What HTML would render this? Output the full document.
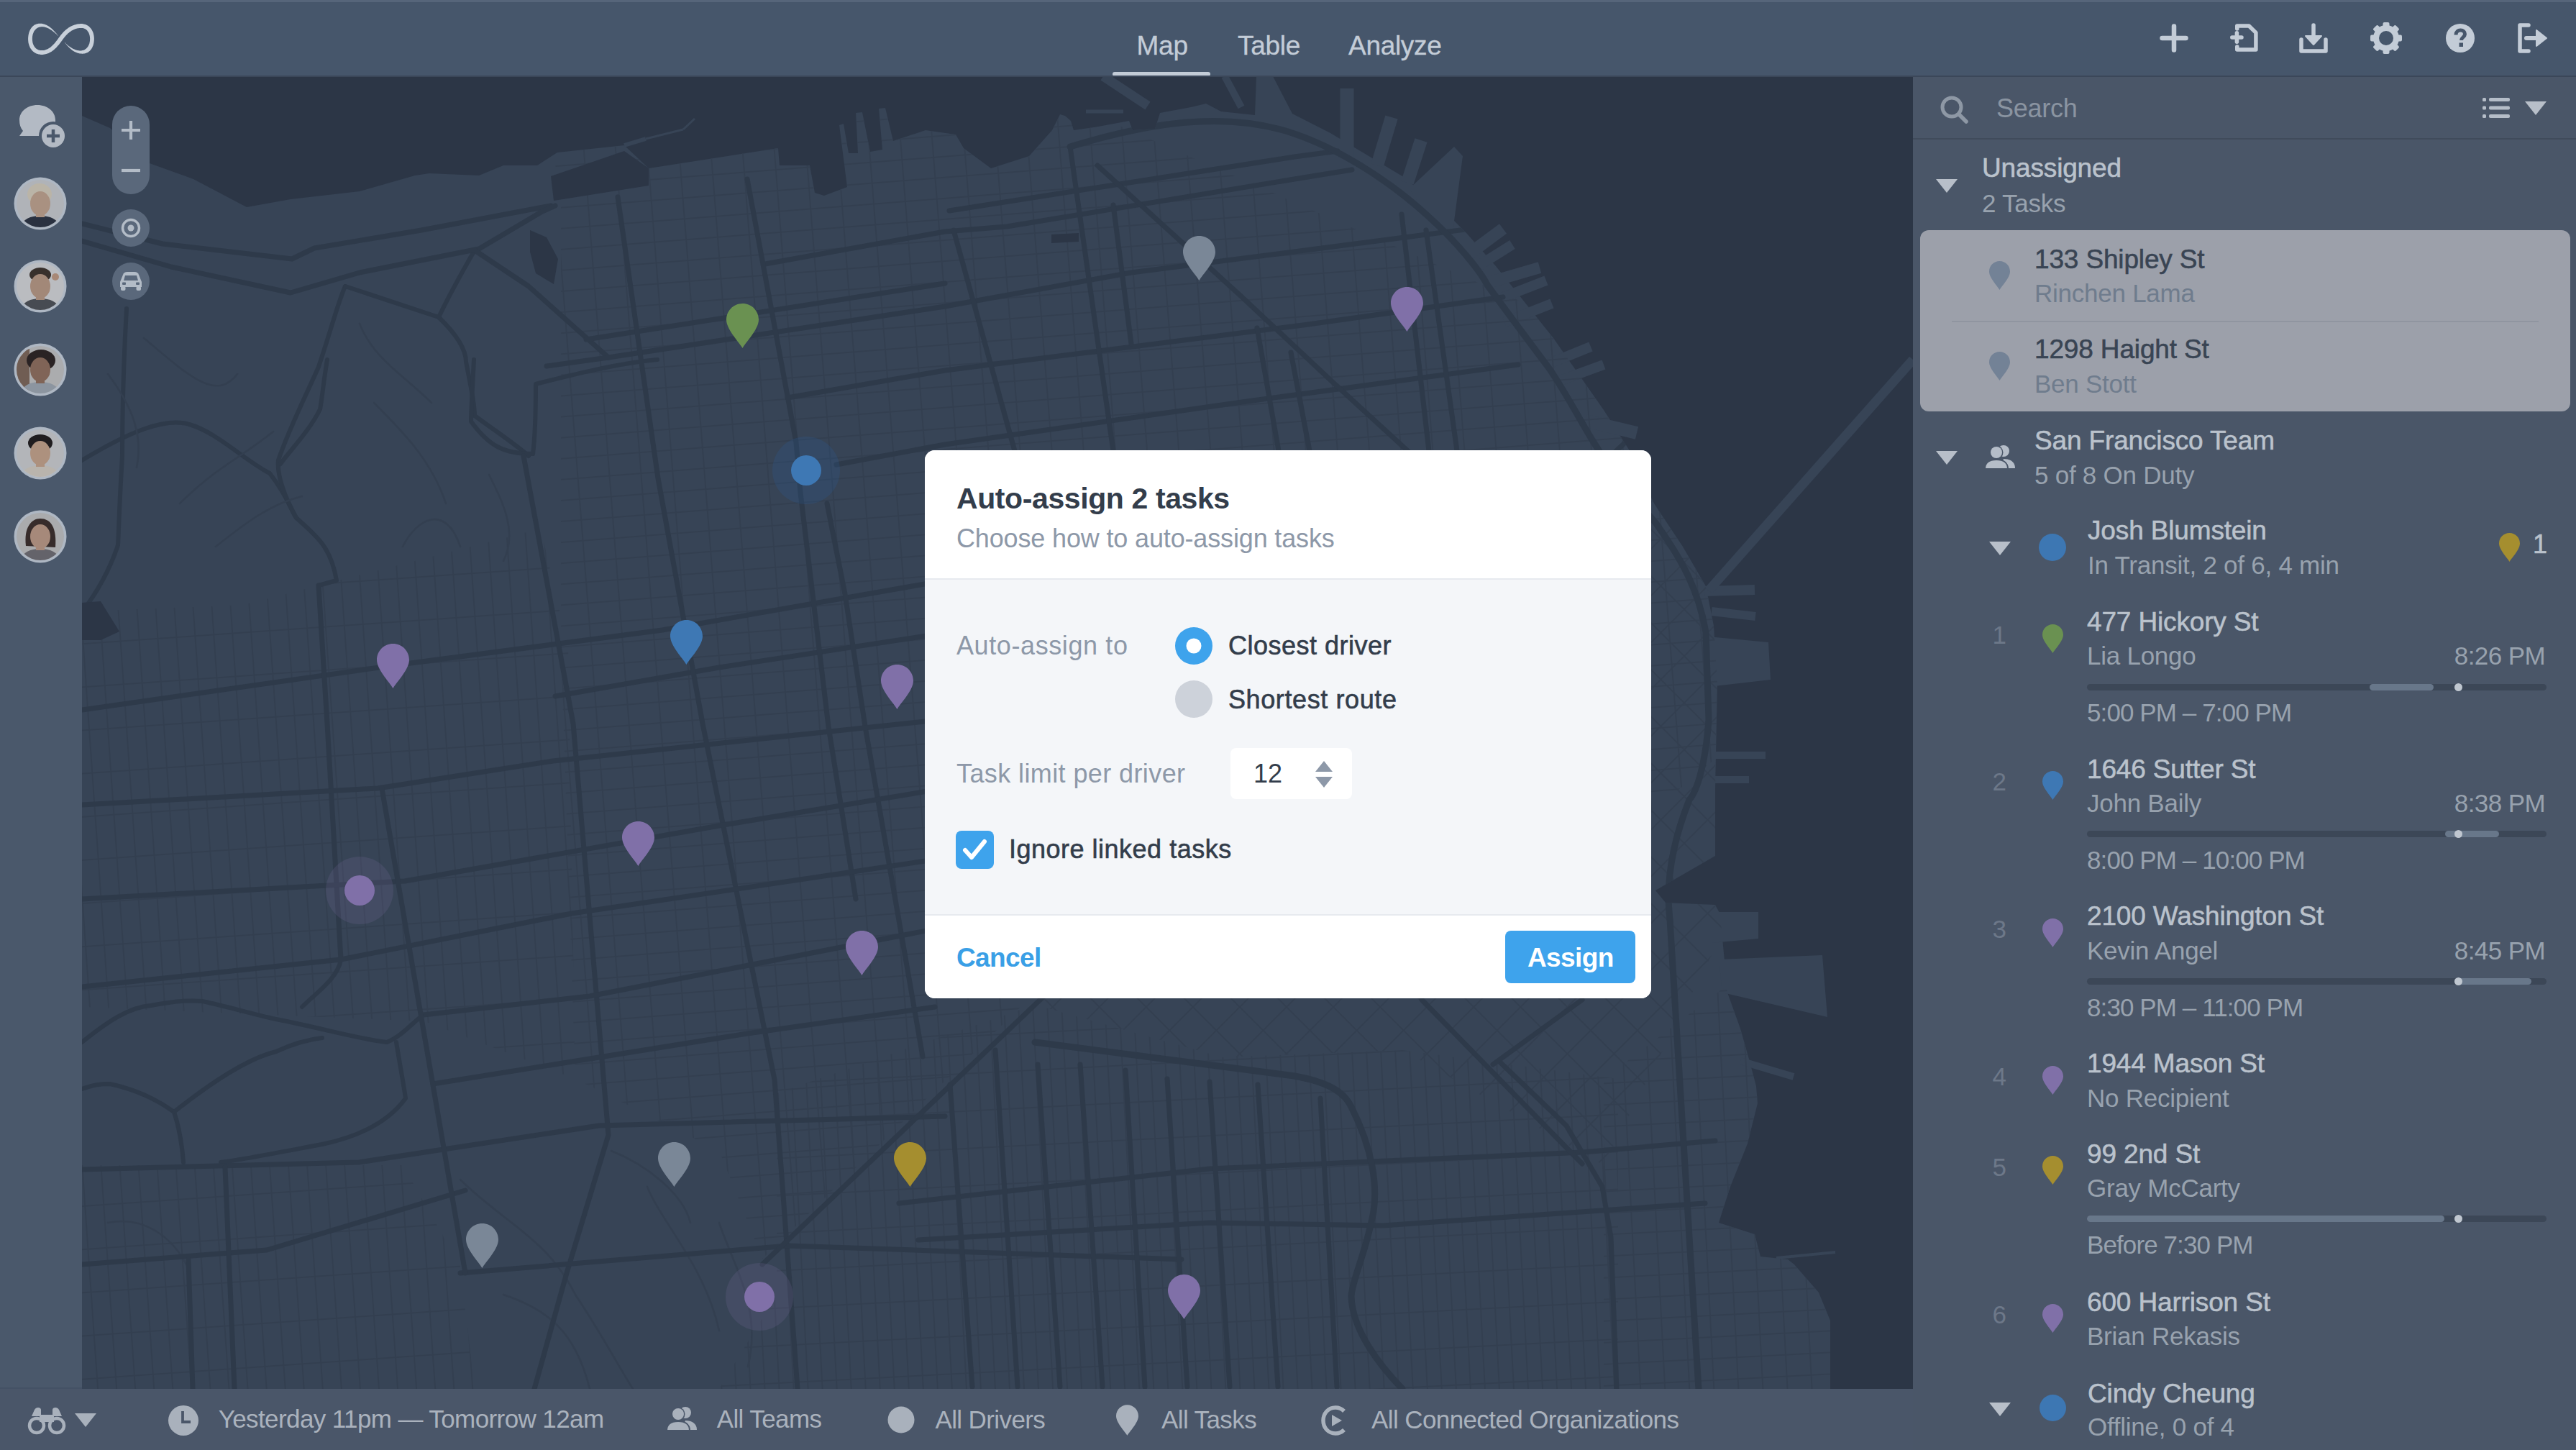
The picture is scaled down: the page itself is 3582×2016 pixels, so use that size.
<!DOCTYPE html>
<html><head><meta charset="utf-8">
<style>
*{margin:0;padding:0;box-sizing:border-box}
html,body{width:3582px;height:2016px;overflow:hidden;background:#4a5668;font-family:"Liberation Sans",sans-serif}
.a{position:absolute}
.t{position:absolute;white-space:nowrap;line-height:1}
#nav{left:0;top:0;width:3582px;height:106px;background:#46566b;border-top:3px solid #56657a}
.tab{font-size:37px;color:#c3ccd7;letter-spacing:-0.3px;-webkit-text-stroke:0.35px currentColor}
#lsb{left:0;top:106px;width:114px;height:1826px;background:#4a586b}
#map{left:114px;top:106px;width:2546px;height:1826px;background:#38455a;overflow:hidden}
#rp{left:2660px;top:106px;width:922px;height:1910px;background:#4a5668}
#bb{left:0;top:1931px;width:2660px;height:85px;background:#4a5669}
.bt{font-size:35px;color:#aab2bd;letter-spacing:-0.6px}
.ti{font-size:37px;color:#bac2cc;letter-spacing:-0.15px;-webkit-text-stroke:0.55px currentColor}
.st{font-size:35px;color:#98a2ae;letter-spacing:-0.25px}
.num{font-size:35px;color:#6d7889}
.tm{font-size:35px;color:#98a2ae;letter-spacing:-0.6px;text-align:right}
.bar{position:absolute;height:9px;border-radius:5px;background:#3c4757}
.seg{position:absolute;height:9px;border-radius:5px;background:#68778a}
.dotw{position:absolute;width:11px;height:11px;border-radius:50%;background:#c0c7d0}
#modal{left:1286px;top:626px;width:1010px;height:762px;background:#f4f6f9;border-radius:14px;overflow:hidden}
</style></head><body>
<div class="a" id="nav"></div>
<div class="t tab" style="left:1580.6px;top:44.5px;font-size:37px;">Map</div>
<div class="t tab" style="left:1721.0px;top:44.5px;font-size:37px;">Table</div>
<div class="t tab" style="left:1875.0px;top:44.5px;font-size:37px;">Analyze</div>
<div class="a" style="left:1547px;top:100px;width:136px;height:6px;background:#c3ccd7;border-radius:3px"></div>
<svg class="a" style="left:0px;top:0px" width="180" height="106" viewBox="0 0 180 106"><path d="M81.1,49.9 L80.4,49.1 L79.7,48.3 L79.1,47.5 L78.4,46.6 L77.7,45.8 L77.0,45.0 L76.3,44.2 L75.6,43.5 L74.9,42.7 L74.2,41.9 L73.5,41.2 L72.7,40.5 L72.0,39.8 L71.2,39.2 L70.4,38.5 L69.6,37.9 L68.8,37.3 L68.0,36.7 L67.2,36.2 L66.3,35.7 L65.5,35.2 L64.6,34.8 L63.7,34.4 L62.8,34.0 L61.9,33.7 L60.9,33.4 L60.0,33.2 L59.0,33.0 L58.0,32.8 L57.0,32.7 L55.9,32.7 L54.8,32.7 L53.7,32.8 L52.6,33.0 L51.6,33.2 L50.6,33.5 L49.6,33.9 L48.7,34.3 L47.7,34.8 L46.9,35.4 L46.1,36.0 L45.4,36.7 L44.7,37.5 L44.0,38.3 L43.4,39.1 L42.8,39.9 L42.3,40.8 L41.8,41.7 L41.4,42.6 L41.0,43.6 L40.6,44.5 L40.3,45.5 L40.0,46.5 L39.8,47.6 L39.6,48.6 L39.4,49.7 L39.3,50.7 L39.2,51.8 L39.1,52.9 L39.1,54.0 L39.1,55.2 L39.2,56.4 L39.3,57.5 L39.4,58.7 L39.6,59.8 L39.9,60.9 L40.2,62.0 L40.5,63.0 L40.9,64.0 L41.3,65.0 L41.7,66.0 L42.2,66.9 L42.8,67.8 L43.4,68.6 L44.0,69.5 L44.7,70.2 L45.4,71.0 L46.2,71.7 L47.0,72.3 L47.8,72.9 L48.7,73.5 L49.6,74.0 L50.5,74.4 L51.5,74.8 L52.5,75.1 L53.6,75.4 L54.6,75.6 L55.7,75.8 L56.9,75.9 L58.0,75.9 L59.3,75.9 L60.7,75.8 L62.0,75.6 L63.2,75.3 L64.5,75.0 L65.7,74.6 L66.9,74.2 L68.0,73.7 L69.1,73.1 L70.2,72.6 L71.3,71.9 L72.3,71.2 L73.3,70.5 L74.3,69.7 L75.3,69.0 L76.2,68.1 L77.1,67.3 L78.0,66.4 L78.9,65.5 L79.7,64.6 L80.5,63.6 L81.4,62.7 L82.2,61.7 L82.9,60.7 L83.7,59.7 L84.5,58.7 L85.2,57.7 L85.9,56.7 L86.7,55.7 L87.3,54.7 L88.1,53.7 L88.9,52.7 L89.7,51.7 L90.5,50.8 L91.2,49.9 L92.0,49.0 L92.8,48.2 L93.6,47.4 L94.4,46.6 L95.3,45.9 L96.1,45.2 L96.9,44.6 L97.7,44.0 L98.6,43.4 L99.4,42.8 L100.3,42.3 L101.1,41.9 L102.0,41.4 L102.8,41.0 L103.7,40.7 L104.6,40.3 L105.5,40.0 L106.4,39.8 L107.3,39.5 L108.2,39.3 L109.1,39.2 L110.1,39.1 L111.0,39.0 L112.0,38.9 L113.0,38.9 L113.8,38.9 L114.6,39.0 L115.3,39.1 L116.0,39.3 L116.7,39.5 L117.3,39.7 L117.9,40.0 L118.5,40.3 L119.1,40.6 L119.6,41.0 L120.1,41.4 L120.6,41.8 L121.1,42.3 L121.5,42.8 L121.9,43.4 L122.3,43.9 L122.7,44.5 L123.0,45.1 L123.4,45.8 L123.7,46.4 L123.9,47.1 L124.2,47.9 L124.4,48.6 L124.6,49.3 L124.7,50.1 L124.9,50.9 L125.0,51.6 L125.0,52.4 L125.1,53.2 L125.1,54.0 L125.1,54.9 L125.0,55.8 L125.0,56.6 L124.9,57.5 L124.7,58.3 L124.6,59.1 L124.4,59.9 L124.2,60.7 L123.9,61.4 L123.6,62.2 L123.3,62.8 L123.0,63.5 L122.7,64.1 L122.3,64.7 L121.9,65.3 L121.5,65.8 L121.1,66.3 L120.6,66.8 L120.1,67.2 L119.7,67.7 L119.2,68.1 L118.6,68.5 L118.1,68.8 L117.5,69.2 L116.8,69.4 L116.2,69.7 L115.4,69.9 L114.7,70.1 L113.9,70.3 L113.0,70.4 L112.2,70.4 L111.4,70.4 L110.6,70.4 L109.8,70.3 L109.0,70.2 L108.2,70.1 L107.4,69.9 L106.6,69.7 L105.8,69.5 L105.0,69.2 L104.2,68.9 L103.4,68.6 L102.6,68.3 L101.8,67.9 L101.0,67.5 L100.2,67.0 L99.4,66.6 L98.6,66.1 L97.9,65.6 L97.1,65.1 L96.3,64.5 L95.6,63.9 L94.9,63.4 L94.1,62.8 L93.4,62.2 L92.7,61.6 L92.0,60.9 L91.4,60.3 L90.8,59.6 L90.2,58.9 L89.8,59.1 L90.5,59.8 L91.1,60.5 L91.7,61.2 L92.3,62.0 L92.9,62.7 L93.5,63.4 L94.2,64.1 L94.8,64.8 L95.5,65.5 L96.2,66.2 L96.9,66.8 L97.6,67.5 L98.3,68.1 L99.0,68.7 L99.8,69.3 L100.6,69.9 L101.3,70.4 L102.1,70.9 L103.0,71.4 L103.8,71.9 L104.6,72.3 L105.5,72.7 L106.4,73.1 L107.3,73.4 L108.2,73.7 L109.1,74.0 L110.1,74.2 L111.0,74.4 L112.0,74.5 L113.0,74.6 L114.1,74.7 L115.2,74.7 L116.3,74.6 L117.3,74.4 L118.3,74.2 L119.3,73.9 L120.3,73.6 L121.2,73.2 L122.1,72.7 L123.0,72.2 L123.8,71.6 L124.6,71.0 L125.3,70.3 L126.0,69.5 L126.6,68.7 L127.2,67.9 L127.7,67.1 L128.2,66.2 L128.6,65.3 L129.0,64.3 L129.4,63.4 L129.7,62.4 L130.0,61.4 L130.2,60.4 L130.4,59.4 L130.6,58.3 L130.7,57.2 L130.8,56.2 L130.9,55.1 L130.9,54.0 L130.9,53.0 L130.8,52.0 L130.7,51.0 L130.6,50.0 L130.4,49.0 L130.2,48.0 L130.0,47.0 L129.7,46.1 L129.4,45.1 L129.0,44.2 L128.6,43.3 L128.2,42.4 L127.7,41.6 L127.2,40.7 L126.6,39.9 L126.0,39.1 L125.3,38.4 L124.6,37.7 L123.9,37.0 L123.1,36.3 L122.2,35.8 L121.4,35.2 L120.4,34.7 L119.5,34.3 L118.5,34.0 L117.5,33.7 L116.4,33.4 L115.3,33.2 L114.2,33.1 L113.0,33.1 L111.8,33.1 L110.6,33.2 L109.4,33.3 L108.3,33.5 L107.1,33.6 L106.0,33.9 L104.9,34.2 L103.7,34.5 L102.6,34.9 L101.6,35.3 L100.5,35.7 L99.4,36.2 L98.4,36.7 L97.4,37.3 L96.3,37.9 L95.3,38.6 L94.4,39.2 L93.4,40.0 L92.4,40.7 L91.5,41.5 L90.5,42.3 L89.6,43.2 L88.7,44.1 L87.8,45.0 L86.9,46.0 L86.1,47.0 L85.2,48.0 L84.3,49.1 L83.5,50.2 L82.7,51.3 L81.9,52.3 L81.2,53.3 L80.5,54.3 L79.8,55.2 L79.1,56.2 L78.4,57.1 L77.6,58.1 L76.9,59.0 L76.2,59.8 L75.4,60.7 L74.6,61.5 L73.9,62.3 L73.1,63.1 L72.3,63.8 L71.5,64.5 L70.7,65.2 L69.9,65.9 L69.0,66.5 L68.2,67.0 L67.3,67.5 L66.5,68.0 L65.6,68.4 L64.7,68.8 L63.8,69.1 L62.9,69.4 L62.0,69.7 L61.0,69.9 L60.0,70.0 L59.0,70.1 L58.0,70.1 L57.2,70.1 L56.4,70.0 L55.6,69.9 L54.9,69.8 L54.2,69.6 L53.5,69.4 L52.8,69.1 L52.2,68.8 L51.6,68.5 L51.0,68.1 L50.5,67.7 L49.9,67.3 L49.4,66.8 L49.0,66.3 L48.5,65.8 L48.1,65.2 L47.7,64.6 L47.3,64.0 L46.9,63.3 L46.6,62.6 L46.3,61.9 L46.0,61.1 L45.7,60.3 L45.5,59.5 L45.3,58.7 L45.2,57.8 L45.1,56.9 L45.0,55.9 L44.9,55.0 L44.9,54.0 L44.9,53.1 L45.0,52.2 L45.0,51.3 L45.1,50.5 L45.3,49.6 L45.4,48.8 L45.6,48.0 L45.8,47.2 L46.1,46.4 L46.4,45.7 L46.7,45.0 L47.0,44.3 L47.3,43.6 L47.7,43.0 L48.1,42.4 L48.5,41.9 L49.0,41.4 L49.4,40.9 L49.9,40.4 L50.4,40.0 L51.0,39.6 L51.5,39.2 L52.0,38.8 L52.6,38.5 L53.2,38.2 L53.9,37.9 L54.6,37.7 L55.4,37.5 L56.2,37.4 L57.0,37.3 L57.8,37.2 L58.6,37.2 L59.4,37.2 L60.2,37.3 L61.0,37.4 L61.8,37.6 L62.6,37.7 L63.4,38.0 L64.2,38.2 L65.0,38.5 L65.8,38.8 L66.6,39.2 L67.4,39.6 L68.3,40.0 L69.1,40.5 L69.9,41.0 L70.7,41.5 L71.5,42.0 L72.3,42.6 L73.1,43.2 L73.9,43.8 L74.7,44.4 L75.5,45.1 L76.3,45.7 L77.1,46.4 L77.9,47.1 L78.7,47.8 L79.4,48.5 L80.1,49.3 L80.9,50.1Z" fill="#c8d0da"/></svg>
<svg class="a" style="left:3000px;top:30px" width="46" height="46" viewBox="0 0 46 46"><path d="M23 6.5V39.5M6.5 23H39.5" stroke="#c3ccd7" stroke-width="6.5" stroke-linecap="round"/></svg>
<svg class="a" style="left:3098px;top:30px" width="46" height="46" viewBox="0 0 46 46">
<path d="M12.75 10V6H29.2L38.9 15.4V39H12.75V35" fill="none" stroke="#c3ccd7" stroke-width="5.5" stroke-linejoin="round" stroke-linecap="round"/>
<path d="M5.8 22H19M12.4 15.7V28.3" stroke="#c3ccd7" stroke-width="5.5" stroke-linecap="round"/></svg>
<svg class="a" style="left:3194px;top:30px" width="46" height="46" viewBox="0 0 46 46">
<path d="M6 25V41H40V25" fill="none" stroke="#c3ccd7" stroke-width="5.5" stroke-linejoin="round" stroke-linecap="round"/>
<path d="M23 5V22" stroke="#c3ccd7" stroke-width="5.5" stroke-linecap="round"/><path d="M12 20H34L23 32Z" fill="#c3ccd7" stroke="#c3ccd7" stroke-width="2" stroke-linejoin="round"/></svg>
<svg class="a" style="left:3295px;top:30px" width="46" height="46" viewBox="0 0 46 46"><rect x="18.5" y="1" width="9" height="10" rx="2" fill="#c3ccd7" transform="rotate(0 23 23)"/><rect x="18.5" y="1" width="9" height="10" rx="2" fill="#c3ccd7" transform="rotate(45 23 23)"/><rect x="18.5" y="1" width="9" height="10" rx="2" fill="#c3ccd7" transform="rotate(90 23 23)"/><rect x="18.5" y="1" width="9" height="10" rx="2" fill="#c3ccd7" transform="rotate(135 23 23)"/><rect x="18.5" y="1" width="9" height="10" rx="2" fill="#c3ccd7" transform="rotate(180 23 23)"/><rect x="18.5" y="1" width="9" height="10" rx="2" fill="#c3ccd7" transform="rotate(225 23 23)"/><rect x="18.5" y="1" width="9" height="10" rx="2" fill="#c3ccd7" transform="rotate(270 23 23)"/><rect x="18.5" y="1" width="9" height="10" rx="2" fill="#c3ccd7" transform="rotate(315 23 23)"/><circle cx="23" cy="23" r="14" fill="none" stroke="#c3ccd7" stroke-width="8"/></svg>
<svg class="a" style="left:3398px;top:30px" width="46" height="46" viewBox="0 0 46 46"><circle cx="23" cy="23" r="20" fill="#c3ccd7"/>
<path d="M17 18.5C17 14 20 12 23.5 12C27 12 29.5 14.5 29.5 17.5C29.5 21.5 24.5 22 24.5 26" fill="none" stroke="#46566b" stroke-width="5" stroke-linecap="butt"/><rect x="21.5" y="29.5" width="5.5" height="5.5" fill="#46566b"/></svg>
<svg class="a" style="left:3498px;top:30px" width="48" height="46" viewBox="0 0 48 46">
<path d="M18 5H6V41H18" fill="none" stroke="#c3ccd7" stroke-width="5.5" stroke-linejoin="round" stroke-linecap="round"/>
<path d="M15 23H32" stroke="#c3ccd7" stroke-width="6" stroke-linecap="round"/><path d="M29 12L43 23L29 34Z" fill="#c3ccd7" stroke="#c3ccd7" stroke-width="2" stroke-linejoin="round"/></svg>
<div class="a" id="lsb"></div>
<svg class="a" style="left:0px;top:130px" width="110" height="90" viewBox="0 130 110 90">
<path d="M27 189 L32 182 C28.5 178 27 173 27 167 C27 155 38 146 52 146 C66 146 77 155 77 167 L77 189 Z" fill="#b3bac4"/>
<circle cx="74" cy="189" r="20" fill="#4a586b"/><circle cx="74" cy="189" r="16" fill="#b3bac4"/>
<path d="M74 180V198M65 189H83" stroke="#4a586b" stroke-width="4.5"/></svg>
<svg class="a" style="left:19px;top:246px" width="74" height="74" viewBox="0 0 74 74">
<defs><clipPath id="cp0"><circle cx="37" cy="37" r="33"/></clipPath></defs>
<circle cx="37" cy="37" r="36.5" fill="#aeb7c3"/>
<g clip-path="url(#cp0)"><rect width="74" height="74" fill="#c3c5c9"/>
<path d="M8 74 C10 60 22 54 37 54 C52 54 64 60 66 74Z" fill="#2b3240"/>
<rect x="31" y="46" width="12" height="10" fill="#bb9f8a"/>
<ellipse cx="36" cy="24" rx="17" ry="15" fill="#cfc6b6"/>
<ellipse cx="37" cy="37" rx="14" ry="17" fill="#bb9f8a"/>
<rect width="74" height="74" fill="#2b3545" opacity="0.12"/></g></svg>
<svg class="a" style="left:19px;top:361px" width="74" height="74" viewBox="0 0 74 74">
<defs><clipPath id="cp1"><circle cx="37" cy="37" r="33"/></clipPath></defs>
<circle cx="37" cy="37" r="36.5" fill="#aeb7c3"/>
<g clip-path="url(#cp1)"><rect width="74" height="74" fill="#cfd0d2"/><circle cx="58" cy="24" r="5" fill="#b07a5a" opacity="0.7"/>
<path d="M8 74 C10 60 22 54 37 54 C52 54 64 60 66 74Z" fill="#4c4f55"/>
<rect x="31" y="46" width="12" height="10" fill="#b39480"/>
<ellipse cx="37" cy="21" rx="15" ry="10" fill="#3b302a"/>
<ellipse cx="37" cy="37" rx="14" ry="17" fill="#b39480"/>
<rect width="74" height="74" fill="#2b3545" opacity="0.12"/></g></svg>
<svg class="a" style="left:19px;top:477px" width="74" height="74" viewBox="0 0 74 74">
<defs><clipPath id="cp2"><circle cx="37" cy="37" r="33"/></clipPath></defs>
<circle cx="37" cy="37" r="36.5" fill="#aeb7c3"/>
<g clip-path="url(#cp2)"><rect width="74" height="74" fill="#bdbdbd"/><rect x="0" y="0" width="22" height="74" fill="#7a6356"/>
<path d="M8 74 C10 60 22 54 37 54 C52 54 64 60 66 74Z" fill="#9aa3ad"/>
<rect x="31" y="46" width="12" height="10" fill="#8c6c5a"/>
<ellipse cx="38" cy="24" rx="20" ry="15" fill="#2b2220"/>
<ellipse cx="37" cy="37" rx="14" ry="17" fill="#8c6c5a"/>
<rect width="74" height="74" fill="#2b3545" opacity="0.12"/></g></svg>
<svg class="a" style="left:19px;top:593px" width="74" height="74" viewBox="0 0 74 74">
<defs><clipPath id="cp3"><circle cx="37" cy="37" r="33"/></clipPath></defs>
<circle cx="37" cy="37" r="36.5" fill="#aeb7c3"/>
<g clip-path="url(#cp3)"><rect width="74" height="74" fill="#c6c8ca"/>
<path d="M8 74 C10 60 22 54 37 54 C52 54 64 60 66 74Z" fill="#cdc6bc"/>
<rect x="31" y="46" width="12" height="10" fill="#c09f87"/>
<ellipse cx="37" cy="23" rx="17" ry="12" fill="#1f1b1b"/>
<ellipse cx="37" cy="37" rx="14" ry="17" fill="#c09f87"/>
<rect width="74" height="74" fill="#2b3545" opacity="0.12"/></g></svg>
<svg class="a" style="left:19px;top:709px" width="74" height="74" viewBox="0 0 74 74">
<defs><clipPath id="cp4"><circle cx="37" cy="37" r="33"/></clipPath></defs>
<circle cx="37" cy="37" r="36.5" fill="#aeb7c3"/>
<g clip-path="url(#cp4)"><rect width="74" height="74" fill="#bcbcbc"/>
<path d="M8 74 C10 60 22 54 37 54 C52 54 64 60 66 74Z" fill="#6d6a70"/>
<rect x="31" y="46" width="12" height="10" fill="#b89682"/>
<path d="M17 50 C14 25 24 12 37 12 C52 12 60 25 58 52 Z" fill="#3a2c28"/>
<ellipse cx="37" cy="37" rx="14" ry="17" fill="#b89682"/>
<rect width="74" height="74" fill="#2b3545" opacity="0.12"/></g></svg>
<svg class="a" style="left:114px;top:106px" width="2546" height="1826" viewBox="114 106 2546 1826">
<defs>
<pattern id="gN" x="0" y="0" width="44" height="29" patternUnits="userSpaceOnUse" patternTransform="rotate(-4.5)"><path d="M0 0H44M0 0V29" stroke="#333f50" stroke-width="4" fill="none"/></pattern>
<pattern id="gW" x="0" y="0" width="26" height="60" patternUnits="userSpaceOnUse" patternTransform="rotate(-4)"><path d="M0 0H26M0 0V60" stroke="#333f50" stroke-width="4" fill="none"/></pattern>
<pattern id="gM" x="0" y="0" width="20" height="52" patternUnits="userSpaceOnUse" patternTransform="rotate(-3)"><path d="M0 0H20M0 0V52" stroke="#333f50" stroke-width="4" fill="none"/></pattern>
<pattern id="gS" x="0" y="0" width="46" height="46" patternUnits="userSpaceOnUse" patternTransform="rotate(45)"><path d="M0 0H46M0 0V46" stroke="#333f50" stroke-width="4" fill="none"/></pattern>
<pattern id="gE" x="0" y="0" width="34" height="30" patternUnits="userSpaceOnUse" patternTransform="rotate(-3)"><path d="M0 0H34M0 0V30" stroke="#333f50" stroke-width="4" fill="none"/></pattern>
<clipPath id="landc"><path d="M114,161 L153,178 L208,227 L269,249 L343,288 L404,277 L500,266 L577,244 L597,241 L666,244 L700,230 L747,230 L775,212 L868,202 L902,234 L1082,206 L1084,230 L1126,230 L1133,268 L1146,272 L1178,260 L1167,174 L1173,172 L1180,213 L1193,213 L1190,157 L1199,156 L1210,211 L1227,208 L1222,151 L1231,150 L1242,196 L1287,181 L1329,187 L1340,206 L1378,234 L1431,217 L1463,181 L1474,159 L1481,161 L1489,168 L1493,181 L1527,176 L1570,168 L1575,181 L1606,179 L1613,157 L1656,149 L1677,144 L1698,155 L1745,160 L1747,106 L1770,106 L1797,158 L1850,185 L1905,218 L1950,245 L2000,285 L2040,325 L2080,370 L2120,420 L2160,470 L2195,520 L2230,570 L2265,625 L2300,700 L2340,760 L2372,815 L2383,870 L2388,950 L2385,1100 L2385,1190 L2302,1238 L2316,1255 L2385,1258 L2392,1271 L2402,1380 L2420,1430 L2433,1476 L2442,1510 L2444,1534 L2430,1590 L2406,1650 L2390,1700 L2440,1716 L2448,1747 L2486,1751 L2495,1758 L2529,1797 L2545,1836 L2545,1932 L114,1932Z"/></clipPath>
</defs>
<rect x="114" y="106" width="2546" height="1826" fill="#2c3646"/>
<path d="M114,161 L153,178 L208,227 L269,249 L343,288 L404,277 L500,266 L577,244 L597,241 L666,244 L700,230 L747,230 L775,212 L868,202 L902,234 L1082,206 L1084,230 L1126,230 L1133,268 L1146,272 L1178,260 L1167,174 L1173,172 L1180,213 L1193,213 L1190,157 L1199,156 L1210,211 L1227,208 L1222,151 L1231,150 L1242,196 L1287,181 L1329,187 L1340,206 L1378,234 L1431,217 L1463,181 L1474,159 L1481,161 L1489,168 L1493,181 L1527,176 L1570,168 L1575,181 L1606,179 L1613,157 L1656,149 L1677,144 L1698,155 L1745,160 L1747,106 L1770,106 L1797,158 L1850,185 L1905,218 L1950,245 L2000,285 L2040,325 L2080,370 L2120,420 L2160,470 L2195,520 L2230,570 L2265,625 L2300,700 L2340,760 L2372,815 L2383,870 L2388,950 L2385,1100 L2385,1190 L2302,1238 L2316,1255 L2385,1258 L2392,1271 L2402,1380 L2420,1430 L2433,1476 L2442,1510 L2444,1534 L2430,1590 L2406,1650 L2390,1700 L2440,1716 L2448,1747 L2486,1751 L2495,1758 L2529,1797 L2545,1836 L2545,1932 L114,1932Z" fill="#374456"/>
<path d="M1873,222 L1873,123" stroke="#374456" stroke-width="19"/>
<path d="M1915,230 L1935,163" stroke="#374456" stroke-width="18"/>
<path d="M1957,254 L1976,195" stroke="#374456" stroke-width="18"/>
<path d="M2040,355 L2090,318" stroke="#374456" stroke-width="17"/>
<path d="M2052,372 L2103,340" stroke="#374456" stroke-width="14"/>
<path d="M2062,395 L2141,372" stroke="#374456" stroke-width="16"/>
<path d="M2078,418 L2150,390" stroke="#374456" stroke-width="14"/>
<path d="M2092,448 L2158,422" stroke="#374456" stroke-width="14"/>
<path d="M2148,508 L2212,482" stroke="#374456" stroke-width="14"/>
<path d="M2162,532 L2230,507" stroke="#374456" stroke-width="14"/>
<path d="M2205,585 L2276,602" stroke="#374456" stroke-width="18"/>
<path d="M2370,822 L2440,820" stroke="#374456" stroke-width="14"/>
<path d="M2380,850 L2441,857" stroke="#374456" stroke-width="12"/>
<path d="M2380,1050 L2455,1050" stroke="#374456" stroke-width="10"/>
<path d="M2380,1084 L2432,1084" stroke="#374456" stroke-width="10"/>
<path d="M2420,1475 L2494,1497" stroke="#374456" stroke-width="10"/>
<path d="M2470,1749 L2552,1741" stroke="#374456" stroke-width="4"/>
<path d="M1534,106 L1596,147" stroke="#374456" stroke-width="13"/>
<path d="M1703,106 L1726,149" stroke="#374456" stroke-width="10"/>
<path d="M1510,155 L1562,155" stroke="#374456" stroke-width="5"/>
<path d="M868,202 L898,193" stroke="#374456" stroke-width="6"/>
<path d="M898,193 L950,180" stroke="#374456" stroke-width="3"/>
<path d="M950,180 L966,165" stroke="#374456" stroke-width="3"/>
<path d="M1960,262 L2022,204 L2034,217 L2017,345 L1995,320Z" fill="#374456" />
<path d="M2375,885 L2459,893 L2462,945 L2375,955Z" fill="#374456" />
<path d="M2380,1268 L2445,1268 L2445,1305 L2380,1311Z" fill="#374456" />
<path d="M2390,1334 L2534,1328 L2541,1414 L2395,1380Z" fill="#374456" />
<g clip-path="url(#landc)">
<path d="M760,150 L1500,150 L2300,500 L2450,1000 L2000,1380 L1440,1380 L1060,1750 L1000,1600 L800,1500 L780,900 L780,280Z" fill="url(#gN)" />
<path d="M114,850 L338,841 L752,735 L790,900 L800,1500 L590,1420 L114,1400Z" fill="url(#gW)" />
<path d="M114,1620 L560,1620 L640,1760 L660,1931 L114,1931Z" fill="url(#gW)" />
<path d="M1080,1520 L1439,1397 L1700,1470 L1950,1460 L2250,1500 L2250,1931 L1000,1931 L1080,1800Z" fill="url(#gM)" />
<path d="M1439,1397 L2260,610 L2400,800 L2420,1250 L2230,1620 L1950,1460 L1700,1470Z" fill="url(#gS)" />
<path d="M2230,1500 L2560,1250 L2560,1931 L2230,1931Z" fill="url(#gE)" />
<path d="M114,640 C180,600 230,580 263,590 C300,600 340,640 375,658 C400,690 405,710 412,720 C440,745 460,760 468,807 L443,814" fill="none" stroke="#2e3a4a" stroke-width="6" stroke-linejoin="round" stroke-linecap="round"/>
<path d="M412,720 C395,690 385,660 387,640 C400,600 430,540 443,510 C460,460 470,420 480,398" fill="none" stroke="#2e3a4a" stroke-width="6" stroke-linejoin="round" stroke-linecap="round"/>
<path d="M480,398 L610,441 C640,470 648,490 648,503 C655,540 660,560 660,578 C690,600 720,620 735,634" fill="none" stroke="#2e3a4a" stroke-width="6" stroke-linejoin="round" stroke-linecap="round"/>
<path d="M455,500 C450,530 447,560 445,569 C430,600 400,630 390,645" fill="none" stroke="#2e3a4a" stroke-width="6" stroke-linejoin="round" stroke-linecap="round"/>
<path d="M659,500 C657,540 655,570 655,586 C680,620 700,631 741,631 C745,600 745,560 745,534 C800,520 860,505 914,500" fill="none" stroke="#2e3a4a" stroke-width="6" stroke-linejoin="round" stroke-linecap="round"/>
<path d="M176,429 C172,500 170,580 170,634 C166,700 165,740 164,758 C150,800 130,830 114,851" fill="none" stroke="#2e3a4a" stroke-width="6" stroke-linejoin="round" stroke-linecap="round"/>
<path d="M610,441 C620,420 630,400 660,348" fill="none" stroke="#2e3a4a" stroke-width="6" stroke-linejoin="round" stroke-linecap="round"/>
<path d="M200,470 C260,520 300,560 330,520" fill="none" stroke="#333f50" stroke-width="2.5" stroke-linejoin="round" stroke-linecap="round"/>
<path d="M520,560 C560,600 600,640 620,700" fill="none" stroke="#333f50" stroke-width="2.5" stroke-linejoin="round" stroke-linecap="round"/>
<path d="M300,760 C350,720 380,700 420,690" fill="none" stroke="#333f50" stroke-width="2.5" stroke-linejoin="round" stroke-linecap="round"/>
<path d="M560,760 C580,720 620,700 640,760" fill="none" stroke="#333f50" stroke-width="2.5" stroke-linejoin="round" stroke-linecap="round"/>
<path d="M250,700 C300,650 330,640 380,600" fill="none" stroke="#333f50" stroke-width="2.5" stroke-linejoin="round" stroke-linecap="round"/>
<path d="M500,450 C520,500 560,520 600,560" fill="none" stroke="#333f50" stroke-width="2.5" stroke-linejoin="round" stroke-linecap="round"/>
<path d="M680,660 C700,700 720,740 700,780" fill="none" stroke="#333f50" stroke-width="2.5" stroke-linejoin="round" stroke-linecap="round"/>
<path d="M150,520 C180,560 200,600 190,650" fill="none" stroke="#333f50" stroke-width="2.5" stroke-linejoin="round" stroke-linecap="round"/>
<path d="M114,1449 C150,1420 180,1400 210,1398 C240,1392 260,1390 281,1392 C320,1400 350,1410 384,1417 C450,1430 500,1445 538,1449 C560,1440 575,1420 589,1411" fill="none" stroke="#2e3a4a" stroke-width="6" stroke-linejoin="round" stroke-linecap="round"/>
<path d="M114,1514 C130,1508 140,1507 153,1507 C190,1515 220,1530 242,1546 C250,1570 253,1590 255,1616" fill="none" stroke="#2e3a4a" stroke-width="6" stroke-linejoin="round" stroke-linecap="round"/>
<path d="M242,1546 C300,1500 350,1470 384,1462 C410,1450 430,1445 448,1443" fill="none" stroke="#2e3a4a" stroke-width="6" stroke-linejoin="round" stroke-linecap="round"/>
<path d="M551,1449 C556,1480 560,1500 564,1527 C540,1560 500,1580 448,1591 C400,1600 340,1612 307,1616" fill="none" stroke="#2e3a4a" stroke-width="6" stroke-linejoin="round" stroke-linecap="round"/>
<path d="M474,1334 C470,1360 440,1380 420,1400" fill="none" stroke="#2e3a4a" stroke-width="6" stroke-linejoin="round" stroke-linecap="round"/>
<path d="M640,1640 C700,1700 760,1720 800,1800 C840,1860 860,1900 880,1931" fill="none" stroke="#333f50" stroke-width="2.5" stroke-linejoin="round" stroke-linecap="round"/>
<path d="M900,1650 C920,1700 980,1760 1000,1850" fill="none" stroke="#333f50" stroke-width="2.5" stroke-linejoin="round" stroke-linecap="round"/>
<path d="M700,1800 C760,1820 800,1850 820,1931" fill="none" stroke="#333f50" stroke-width="2.5" stroke-linejoin="round" stroke-linecap="round"/>
<path d="M150,1700 C200,1690 240,1720 260,1760" fill="none" stroke="#333f50" stroke-width="2.5" stroke-linejoin="round" stroke-linecap="round"/>
<path d="M850,1600 C900,1620 950,1660 960,1700" fill="none" stroke="#333f50" stroke-width="2.5" stroke-linejoin="round" stroke-linecap="round"/>
<path d="M1000,1700 C1020,1760 1060,1820 1040,1900" fill="none" stroke="#333f50" stroke-width="2.5" stroke-linejoin="round" stroke-linecap="round"/>
<path d="M114,311 L226,339 L406,360 L437,345 L586,320 L766,286" fill="none" stroke="#2e3a4a" stroke-width="7" stroke-linejoin="round" stroke-linecap="round"/>
<path d="M114,335 L238,371 L404,407 L500,379 L666,346 L754,294 L772,286" fill="none" stroke="#2e3a4a" stroke-width="7" stroke-linejoin="round" stroke-linecap="round"/>
<path d="M660,348 L735,398 L846,497" fill="none" stroke="#2e3a4a" stroke-width="7" stroke-linejoin="round" stroke-linecap="round"/>
<path d="M1064,367 L1314,322 L1400,315 L1800,249 L1880,236" fill="none" stroke="#2e3a4a" stroke-width="7" stroke-linejoin="round" stroke-linecap="round"/>
<path d="M1320,293 L1800,218 L1860,210" fill="none" stroke="#2e3a4a" stroke-width="7" stroke-linejoin="round" stroke-linecap="round"/>
<path d="M760,509 L846,497 L1314,426 L1573,379 L1838,345 L2068,315" fill="none" stroke="#2e3a4a" stroke-width="7" stroke-linejoin="round" stroke-linecap="round"/>
<path d="M815,472 L1314,394" fill="none" stroke="#2e3a4a" stroke-width="7" stroke-linejoin="round" stroke-linecap="round"/>
<path d="M1095,553 L1314,515 L1812,452 L2090,413" fill="none" stroke="#2e3a4a" stroke-width="7" stroke-linejoin="round" stroke-linecap="round"/>
<path d="M1163,646 L1314,618 L1727,559 L2111,507" fill="none" stroke="#2e3a4a" stroke-width="7" stroke-linejoin="round" stroke-linecap="round"/>
<path d="M114,987 L548,925 L921,876 L1314,807" fill="none" stroke="#2e3a4a" stroke-width="7" stroke-linejoin="round" stroke-linecap="round"/>
<path d="M772,968 L1000,928 L1314,880" fill="none" stroke="#2e3a4a" stroke-width="7" stroke-linejoin="round" stroke-linecap="round"/>
<path d="M1039,249 L1107,615 L1113,685 L1152,1010 L1190,1250" fill="none" stroke="#2e3a4a" stroke-width="7" stroke-linejoin="round" stroke-linecap="round"/>
<path d="M1150,700 L1175,826 L1203,1010 L1283,1469" fill="none" stroke="#2e3a4a" stroke-width="7" stroke-linejoin="round" stroke-linecap="round"/>
<path d="M859,274 L915,665 L977,1006 L1077,1501 L1109,1931" fill="none" stroke="#2e3a4a" stroke-width="7" stroke-linejoin="round" stroke-linecap="round"/>
<path d="M728,634 L797,1006 L846,1578 L788,1770 L743,1931" fill="none" stroke="#2e3a4a" stroke-width="7" stroke-linejoin="round" stroke-linecap="round"/>
<path d="M443,814 L455,1006 L474,1334" fill="none" stroke="#2e3a4a" stroke-width="7" stroke-linejoin="round" stroke-linecap="round"/>
<path d="M1326,320 L1411,627" fill="none" stroke="#2e3a4a" stroke-width="7" stroke-linejoin="round" stroke-linecap="round"/>
<path d="M1488,204 L1548,627" fill="none" stroke="#2e3a4a" stroke-width="7" stroke-linejoin="round" stroke-linecap="round"/>
<path d="M1548,285 L1573,478" fill="none" stroke="#2e3a4a" stroke-width="7" stroke-linejoin="round" stroke-linecap="round"/>
<path d="M1748,456 L1778,627" fill="none" stroke="#2e3a4a" stroke-width="7" stroke-linejoin="round" stroke-linecap="round"/>
<path d="M1795,490 L1821,627" fill="none" stroke="#2e3a4a" stroke-width="7" stroke-linejoin="round" stroke-linecap="round"/>
<path d="M1949,298 L1987,627" fill="none" stroke="#2e3a4a" stroke-width="7" stroke-linejoin="round" stroke-linecap="round"/>
<path d="M1983,320 L2026,627" fill="none" stroke="#2e3a4a" stroke-width="7" stroke-linejoin="round" stroke-linecap="round"/>
<path d="M1526,230 L1727,413 L1855,533 L1962,631" fill="none" stroke="#2e3a4a" stroke-width="7" stroke-linejoin="round" stroke-linecap="round"/>
<path d="M114,1119 L525,1096 L769,1058 L1314,1000" fill="none" stroke="#2e3a4a" stroke-width="7" stroke-linejoin="round" stroke-linecap="round"/>
<path d="M114,1250 L563,1225 L1000,1148 L1314,1096" fill="none" stroke="#2e3a4a" stroke-width="7" stroke-linejoin="round" stroke-linecap="round"/>
<path d="M114,1372 L474,1334 L795,1270 L1314,1193" fill="none" stroke="#2e3a4a" stroke-width="7" stroke-linejoin="round" stroke-linecap="round"/>
<path d="M589,1411 L820,1385 L1314,1289" fill="none" stroke="#2e3a4a" stroke-width="7" stroke-linejoin="round" stroke-linecap="round"/>
<path d="M602,1507 L1039,1437 L1300,1400" fill="none" stroke="#2e3a4a" stroke-width="7" stroke-linejoin="round" stroke-linecap="round"/>
<path d="M114,1626 L499,1616 L833,1565 L1314,1552" fill="none" stroke="#2e3a4a" stroke-width="7" stroke-linejoin="round" stroke-linecap="round"/>
<path d="M114,1758 L371,1738 L647,1655" fill="none" stroke="#2e3a4a" stroke-width="7" stroke-linejoin="round" stroke-linecap="round"/>
<path d="M640,1770 L1096,1732 L1643,1751" fill="none" stroke="#2e3a4a" stroke-width="7" stroke-linejoin="round" stroke-linecap="round"/>
<path d="M531,1096 L647,1770" fill="none" stroke="#2e3a4a" stroke-width="7" stroke-linejoin="round" stroke-linecap="round"/>
<path d="M313,1623 L326,1931" fill="none" stroke="#2e3a4a" stroke-width="7" stroke-linejoin="round" stroke-linecap="round"/>
<path d="M262,1751 L268,1931" fill="none" stroke="#2e3a4a" stroke-width="7" stroke-linejoin="round" stroke-linecap="round"/>
<path d="M1060,1758 L1439,1397 L2260,615" fill="none" stroke="#2e3a4a" stroke-width="7" stroke-linejoin="round" stroke-linecap="round"/>
<path d="M1250,1673 L1682,1625 L2200,1602 L2385,1586" fill="none" stroke="#2e3a4a" stroke-width="7" stroke-linejoin="round" stroke-linecap="round"/>
<path d="M1277,1724 L1682,1700 L1923,1704 L2371,1673" fill="none" stroke="#2e3a4a" stroke-width="7" stroke-linejoin="round" stroke-linecap="round"/>
<path d="M1321,1508 L1352,1928" fill="none" stroke="#2e3a4a" stroke-width="7" stroke-linejoin="round" stroke-linecap="round"/>
<path d="M1384,1460 L1415,1928" fill="none" stroke="#2e3a4a" stroke-width="7" stroke-linejoin="round" stroke-linecap="round"/>
<path d="M1443,1480 L1474,1928" fill="none" stroke="#2e3a4a" stroke-width="7" stroke-linejoin="round" stroke-linecap="round"/>
<path d="M1502,1480 L1533,1928" fill="none" stroke="#2e3a4a" stroke-width="7" stroke-linejoin="round" stroke-linecap="round"/>
<path d="M1565,1488 L1592,1928" fill="none" stroke="#2e3a4a" stroke-width="7" stroke-linejoin="round" stroke-linecap="round"/>
<path d="M1623,1500 L1651,1928" fill="none" stroke="#2e3a4a" stroke-width="7" stroke-linejoin="round" stroke-linecap="round"/>
<path d="M1682,1504 L1710,1928" fill="none" stroke="#2e3a4a" stroke-width="7" stroke-linejoin="round" stroke-linecap="round"/>
<path d="M1749,1508 L1777,1928" fill="none" stroke="#2e3a4a" stroke-width="7" stroke-linejoin="round" stroke-linecap="round"/>
<path d="M1836,1527 L1859,1928" fill="none" stroke="#2e3a4a" stroke-width="7" stroke-linejoin="round" stroke-linecap="round"/>
<path d="M2085,1476 L2178,1565 L2228,1650 L2240,1720 L2248,1932" fill="none" stroke="#2e3a4a" stroke-width="7" stroke-linejoin="round" stroke-linecap="round"/>
<path d="M1977,1390 L2200,1618" fill="none" stroke="#2e3a4a" stroke-width="7" stroke-linejoin="round" stroke-linecap="round"/>
<path d="M2200,1390 L2076,1480" fill="none" stroke="#2e3a4a" stroke-width="7" stroke-linejoin="round" stroke-linecap="round"/>
<path d="M1439,1449 C1600,1470 1750,1490 1800,1496 C1850,1505 1870,1520 1879,1539 C1910,1600 1915,1650 1910,1684 C1900,1740 1880,1780 1879,1802 C1880,1850 1920,1900 1950,1931" fill="none" stroke="#2e3a4a" stroke-width="9" stroke-linejoin="round" stroke-linecap="round"/>
<path d="M1488,204 C1600,170 1700,155 1791,183 C1860,205 1930,250 1983,298 C2030,340 2060,380 2068,396 C2100,440 2130,480 2154,512 C2180,550 2200,590 2218,618 C2250,670 2280,700 2303,728 C2340,780 2362,821 2372,879 L2376,1000 C2372,1060 2360,1100 2349,1112 C2330,1160 2315,1220 2322,1278 L2362,1932" fill="none" stroke="#2e3a4a" stroke-width="9" stroke-linejoin="round" stroke-linecap="round"/>
</g>
<path d="M766,245 L868,210 L902,234 L902,258 L770,279Z" fill="#2c3646"/>
<path d="M737,320 L760,330 L776,360 L770,395 L745,380 L737,350Z" fill="#2c3646"/>
<path d="M114,838 L140,836 L166,878 L140,890 L114,890Z" fill="#2c3646"/>
<path d="M1462,326 L1500,324 L1500,336 L1462,338Z" fill="#2c3646"/>
<path d="M2376,821 L2660,500" stroke="#374456" stroke-width="13"/>
</svg>
<div class="a" style="left:156px;top:147px;width:52px;height:123px;background:#5a687b;border-radius:26px"></div>
<svg class="a" style="left:156px;top:147px" width="52" height="123" viewBox="0 0 52 123"><path d="M26 21V47M13 34H39" stroke="#b3bcc7" stroke-width="4.2"/><path d="M13 90H39" stroke="#b3bcc7" stroke-width="4.2"/></svg>
<svg class="a" style="left:156px;top:291px" width="52" height="52" viewBox="0 0 52 52"><circle cx="26" cy="26" r="26" fill="#5a687b"/><circle cx="26" cy="26" r="11.5" fill="none" stroke="#b3bcc7" stroke-width="3.5"/><circle cx="26" cy="26" r="4.5" fill="#b3bcc7"/></svg>
<svg class="a" style="left:156px;top:365px" width="52" height="52" viewBox="0 0 52 52"><circle cx="26" cy="26" r="26" fill="#5a687b"/>
<path d="M11 27 L15 17 C16 14.5 18 13 21 13 H31 C34 13 36 14.5 37 17 L41 27 V34 H11Z" fill="#b3bcc7"/>
<path d="M18 18 H34 L36 25 H16Z" fill="#5a687b"/><rect x="14" y="27.5" width="5" height="3.5" rx="1" fill="#5a687b"/><rect x="33" y="27.5" width="5" height="3.5" rx="1" fill="#5a687b"/>
<rect x="12" y="33" width="6.5" height="6" rx="2" fill="#b3bcc7"/><rect x="33.5" y="33" width="6.5" height="6" rx="2" fill="#b3bcc7"/></svg>
<svg class="a" style="left:1645.1px;top:328.0px" width="45" height="62" viewBox="0 0 45 62"><path d="M22.5 62 C18 54 0 36 0 22.5 C0 10 10 0 22.5 0 C35 0 45 10 45 22.5 C45 36 27 54 22.5 62Z" fill="#7a8797"/></svg>
<svg class="a" style="left:1933.5px;top:399.0px" width="45" height="62" viewBox="0 0 45 62"><path d="M22.5 62 C18 54 0 36 0 22.5 C0 10 10 0 22.5 0 C35 0 45 10 45 22.5 C45 36 27 54 22.5 62Z" fill="#8070a8"/></svg>
<svg class="a" style="left:1010.0px;top:422.0px" width="45" height="62" viewBox="0 0 45 62"><path d="M22.5 62 C18 54 0 36 0 22.5 C0 10 10 0 22.5 0 C35 0 45 10 45 22.5 C45 36 27 54 22.5 62Z" fill="#6a9151"/></svg>
<svg class="a" style="left:1073px;top:606px" width="96" height="96" viewBox="0 0 96 96"><circle cx="48" cy="48" r="47" fill="rgba(40,100,170,0.18)"/><circle cx="48" cy="48" r="21" fill="#3e78b4"/></svg>
<svg class="a" style="left:931.5px;top:862.0px" width="45" height="62" viewBox="0 0 45 62"><path d="M22.5 62 C18 54 0 36 0 22.5 C0 10 10 0 22.5 0 C35 0 45 10 45 22.5 C45 36 27 54 22.5 62Z" fill="#3e78b4"/></svg>
<svg class="a" style="left:524.1px;top:895.0px" width="45" height="62" viewBox="0 0 45 62"><path d="M22.5 62 C18 54 0 36 0 22.5 C0 10 10 0 22.5 0 C35 0 45 10 45 22.5 C45 36 27 54 22.5 62Z" fill="#8070a8"/></svg>
<svg class="a" style="left:1224.5px;top:924.0px" width="45" height="62" viewBox="0 0 45 62"><path d="M22.5 62 C18 54 0 36 0 22.5 C0 10 10 0 22.5 0 C35 0 45 10 45 22.5 C45 36 27 54 22.5 62Z" fill="#8070a8"/></svg>
<svg class="a" style="left:864.9px;top:1142.0px" width="45" height="62" viewBox="0 0 45 62"><path d="M22.5 62 C18 54 0 36 0 22.5 C0 10 10 0 22.5 0 C35 0 45 10 45 22.5 C45 36 27 54 22.5 62Z" fill="#8070a8"/></svg>
<svg class="a" style="left:452px;top:1190px" width="96" height="96" viewBox="0 0 96 96"><circle cx="48" cy="48" r="47" fill="rgba(134,118,173,0.16)"/><circle cx="48" cy="48" r="21" fill="#8070a8"/></svg>
<svg class="a" style="left:1175.5px;top:1294.0px" width="45" height="62" viewBox="0 0 45 62"><path d="M22.5 62 C18 54 0 36 0 22.5 C0 10 10 0 22.5 0 C35 0 45 10 45 22.5 C45 36 27 54 22.5 62Z" fill="#8070a8"/></svg>
<svg class="a" style="left:915.3px;top:1588.0px" width="45" height="62" viewBox="0 0 45 62"><path d="M22.5 62 C18 54 0 36 0 22.5 C0 10 10 0 22.5 0 C35 0 45 10 45 22.5 C45 36 27 54 22.5 62Z" fill="#7a8797"/></svg>
<svg class="a" style="left:1243.0px;top:1588.0px" width="45" height="62" viewBox="0 0 45 62"><path d="M22.5 62 C18 54 0 36 0 22.5 C0 10 10 0 22.5 0 C35 0 45 10 45 22.5 C45 36 27 54 22.5 62Z" fill="#a58e2f"/></svg>
<svg class="a" style="left:647.7px;top:1701.0px" width="45" height="62" viewBox="0 0 45 62"><path d="M22.5 62 C18 54 0 36 0 22.5 C0 10 10 0 22.5 0 C35 0 45 10 45 22.5 C45 36 27 54 22.5 62Z" fill="#7a8797"/></svg>
<svg class="a" style="left:1008px;top:1755px" width="96" height="96" viewBox="0 0 96 96"><circle cx="48" cy="48" r="47" fill="rgba(134,118,173,0.16)"/><circle cx="48" cy="48" r="21" fill="#8070a8"/></svg>
<svg class="a" style="left:1623.9px;top:1772.0px" width="45" height="62" viewBox="0 0 45 62"><path d="M22.5 62 C18 54 0 36 0 22.5 C0 10 10 0 22.5 0 C35 0 45 10 45 22.5 C45 36 27 54 22.5 62Z" fill="#8070a8"/></svg>
<div class="a" id="bb"></div>
<div class="a" style="left:0px;top:1929px;width:114px;height:2px;background:#445165;"></div>
<svg class="a" style="left:38px;top:1955px" width="54" height="40" viewBox="0 0 54 40">
<path d="M6 14 L10 5 C11 3 13 2 15 2 C17 2 19 3 19 5 V14Z M48 14 L44 5 C43 3 41 2 39 2 C37 2 35 3 35 5 V14Z" fill="#a9b1bc"/>
<rect x="17" y="12" width="20" height="10" fill="#a9b1bc"/>
<circle cx="13" cy="27" r="10" fill="none" stroke="#a9b1bc" stroke-width="4.5"/><circle cx="41" cy="27" r="10" fill="none" stroke="#a9b1bc" stroke-width="4.5"/></svg>
<svg class="a" style="left:104px;top:1965px" width="30" height="19" viewBox="0 0 30 19"><path d="M0 0H30L15 19Z" fill="#a9b1bc"/></svg>
<svg class="a" style="left:233px;top:1953px" width="44" height="44" viewBox="0 0 44 44"><circle cx="22" cy="22" r="21" fill="#a9b1bc"/><path d="M21 9V24H32" fill="none" stroke="#4a5669" stroke-width="3.8"/></svg>
<div class="t bt" style="left:303.7px;top:1955.2px;font-size:35px;">Yesterday 11pm — Tomorrow 12am</div>
<svg class="a" style="left:926px;top:1955px" width="44" height="36" viewBox="0 0 44 36">
<circle cx="27" cy="9" r="8" fill="#a9b1bc"/><path d="M27 20 C36 20 43 24 43 33 H22Z" fill="#a9b1bc"/>
<circle cx="17" cy="11" r="9.5" fill="#4a5669"/><circle cx="17" cy="11" r="8" fill="#a9b1bc"/>
<path d="M1 34 C1 25 8 21 17 21 C26 21 33 25 33 34Z" fill="#a9b1bc" stroke="#4a5669" stroke-width="2"/></svg>
<div class="t bt" style="left:996.7px;top:1955.2px;font-size:35px;">All Teams</div>
<svg class="a" style="left:1234px;top:1955px" width="38" height="38" viewBox="0 0 38 38"><circle cx="19" cy="19" r="18.5" fill="#a9b1bc"/></svg>
<div class="t bt" style="left:1300.4px;top:1956.2px;font-size:35px;">All Drivers</div>
<svg class="a" style="left:1552px;top:1953px" width="31" height="43" viewBox="0 0 45 62"><path d="M22.5 62 C18 54 0 36 0 22.5 C0 10 10 0 22.5 0 C35 0 45 10 45 22.5 C45 36 27 54 22.5 62Z" fill="#a9b1bc"/></svg>
<div class="t bt" style="left:1615.0px;top:1956.2px;font-size:35px;">All Tasks</div>
<svg class="a" style="left:1836px;top:1953px" width="42" height="44" viewBox="0 0 42 44"><path d="M33 9 C29 5 25 4 21 4 C11 4 4 12 4 22 C4 32 11 40 21 40 C25 40 29 39 33 35" fill="none" stroke="#a9b1bc" stroke-width="5.5"/><path d="M16 14V30L30 22Z" fill="#a9b1bc"/></svg>
<div class="t bt" style="left:1907.0px;top:1956.2px;font-size:35px;">All Connected Organizations</div>
<div class="a" id="rp"></div>
<div class="a" style="left:2660px;top:192px;width:922px;height:2px;background:#404b5b;"></div>
<svg class="a" style="left:2696px;top:131px" width="44" height="44" viewBox="0 0 44 44"><circle cx="18" cy="18" r="13" fill="none" stroke="#8e98a5" stroke-width="5"/><path d="M28 28L38 38" stroke="#8e98a5" stroke-width="5.5" stroke-linecap="round"/></svg>
<div class="t st" style="left:2776.0px;top:133.1px;font-size:36px;color:#8a94a1">Search</div>
<svg class="a" style="left:3450px;top:134px" width="42" height="32" viewBox="0 0 42 32"><g fill="#b5bdc8"><rect x="2" y="2" width="5" height="5" rx="1.5"/><rect x="2" y="13.5" width="5" height="5" rx="1.5"/><rect x="2" y="25" width="5" height="5" rx="1.5"/><rect x="11" y="2" width="29" height="5" rx="2"/><rect x="11" y="13.5" width="29" height="5" rx="2"/><rect x="11" y="25" width="29" height="5" rx="2"/></g></svg>
<svg class="a" style="left:3511px;top:141px" width="30" height="19" viewBox="0 0 30 19"><path d="M0 0H30L15 19Z" fill="#b8bfc9"/></svg>
<svg class="a" style="left:2692px;top:249px" width="30" height="19" viewBox="0 0 30 19"><path d="M0 0H30L15 19Z" fill="#b8bfc9"/></svg>
<div class="t ti" style="left:2756.0px;top:215.2px;font-size:37px;">Unassigned</div>
<div class="t st" style="left:2756.0px;top:264.6px;font-size:35px;">2 Tasks</div>
<div class="a" style="left:2670px;top:320px;width:904px;height:252px;background:#9ca0aa;border-radius:12px"></div>
<div class="a" style="left:2714px;top:446px;width:816px;height:2px;background:#9095a0;"></div>
<svg class="a" style="left:2766.0px;top:362.0px" width="29" height="42" viewBox="0 0 45 62"><path d="M22.5 62 C18 54 0 36 0 22.5 C0 10 10 0 22.5 0 C35 0 45 10 45 22.5 C45 36 27 54 22.5 62Z" fill="#738296"/></svg>
<svg class="a" style="left:2766.0px;top:488.0px" width="29" height="42" viewBox="0 0 45 62"><path d="M22.5 62 C18 54 0 36 0 22.5 C0 10 10 0 22.5 0 C35 0 45 10 45 22.5 C45 36 27 54 22.5 62Z" fill="#738296"/></svg>
<div class="t ti" style="left:2829.0px;top:342.2px;font-size:37px;color:#394453">133 Shipley St</div>
<div class="t st" style="left:2829.0px;top:390.2px;font-size:35px;color:#6f7c8d">Rinchen Lama</div>
<div class="t ti" style="left:2829.0px;top:467.2px;font-size:37px;color:#394453">1298 Haight St</div>
<div class="t st" style="left:2829.0px;top:515.8px;font-size:35px;color:#6f7c8d">Ben Stott</div>
<svg class="a" style="left:2692px;top:627px" width="30" height="19" viewBox="0 0 30 19"><path d="M0 0H30L15 19Z" fill="#b8bfc9"/></svg>
<svg class="a" style="left:2759px;top:618px" width="44" height="36" viewBox="0 0 44 36">
<circle cx="27" cy="9" r="8" fill="#b5bdc8"/><path d="M27 20 C36 20 43 24 43 33 H22Z" fill="#b5bdc8"/>
<circle cx="17" cy="11" r="9.5" fill="#4a5668"/><circle cx="17" cy="11" r="8" fill="#b5bdc8"/>
<path d="M1 34 C1 25 8 21 17 21 C26 21 33 25 33 34Z" fill="#b5bdc8" stroke="#4a5668" stroke-width="2"/></svg>
<div class="t ti" style="left:2829.0px;top:594.0px;font-size:37px;">San Francisco Team</div>
<div class="t st" style="left:2829.0px;top:642.5px;font-size:35px;">5 of 8 On Duty</div>
<svg class="a" style="left:2766px;top:753px" width="30" height="19" viewBox="0 0 30 19"><path d="M0 0H30L15 19Z" fill="#b8bfc9"/></svg>
<div class="a" style="left:2835px;top:742px;width:38px;height:38px;border-radius:50%;background:#3d77b3"></div>
<div class="t ti" style="left:2903.0px;top:719.2px;font-size:37px;">Josh Blumstein</div>
<div class="t st" style="left:2903.0px;top:767.9px;font-size:35px;">In Transit, 2 of 6, 4 min</div>
<svg class="a" style="left:3475.0px;top:740.0px" width="29" height="42" viewBox="0 0 45 62"><path d="M22.5 62 C18 54 0 36 0 22.5 C0 10 10 0 22.5 0 C35 0 45 10 45 22.5 C45 36 27 54 22.5 62Z" fill="#a58e2f"/></svg>
<div class="t ti" style="left:3522.0px;top:739.1px;font-size:36px;">1</div>
<div class="t num" style="left:2770.5px;top:864.9px;font-size:35px;">1</div>
<svg class="a" style="left:2840.0px;top:866.6px" width="29" height="42" viewBox="0 0 45 62"><path d="M22.5 62 C18 54 0 36 0 22.5 C0 10 10 0 22.5 0 C35 0 45 10 45 22.5 C45 36 27 54 22.5 62Z" fill="#6a9151"/></svg>
<div class="t ti" style="left:2902.0px;top:846.1px;font-size:37px;">477 Hickory St</div>
<div class="t st" style="left:2902.0px;top:894.4px;font-size:35px;">Lia Longo</div>
<div class="t tm" style="right:43.0px;top:894.4px;font-size:35px;">8:26 PM</div>
<div class="bar" style="left:2902px;top:951px;width:639px"></div>
<div class="seg" style="left:3295px;top:951px;width:89px"></div>
<div class="dotw" style="left:3413px;top:950px"></div>
<div class="t st" style="left:2902.0px;top:973.4px;font-size:35px;letter-spacing:-0.9px">5:00 PM – 7:00 PM</div>
<div class="t num" style="left:2770.5px;top:1069.2px;font-size:35px;">2</div>
<svg class="a" style="left:2840.0px;top:1071.0px" width="29" height="42" viewBox="0 0 45 62"><path d="M22.5 62 C18 54 0 36 0 22.5 C0 10 10 0 22.5 0 C35 0 45 10 45 22.5 C45 36 27 54 22.5 62Z" fill="#3e78b4"/></svg>
<div class="t ti" style="left:2902.0px;top:1050.5px;font-size:37px;">1646 Sutter St</div>
<div class="t st" style="left:2902.0px;top:1098.8px;font-size:35px;">John Baily</div>
<div class="t tm" style="right:43.0px;top:1098.8px;font-size:35px;">8:38 PM</div>
<div class="bar" style="left:2902px;top:1155px;width:639px"></div>
<div class="seg" style="left:3400px;top:1155px;width:75px"></div>
<div class="dotw" style="left:3413px;top:1154px"></div>
<div class="t st" style="left:2902.0px;top:1177.8px;font-size:35px;letter-spacing:-0.9px">8:00 PM – 10:00 PM</div>
<div class="t num" style="left:2770.5px;top:1274.0px;font-size:35px;">3</div>
<svg class="a" style="left:2840.0px;top:1275.7px" width="29" height="42" viewBox="0 0 45 62"><path d="M22.5 62 C18 54 0 36 0 22.5 C0 10 10 0 22.5 0 C35 0 45 10 45 22.5 C45 36 27 54 22.5 62Z" fill="#8070a8"/></svg>
<div class="t ti" style="left:2902.0px;top:1255.2px;font-size:37px;">2100 Washington St</div>
<div class="t st" style="left:2902.0px;top:1303.5px;font-size:35px;">Kevin Angel</div>
<div class="t tm" style="right:43.0px;top:1303.5px;font-size:35px;">8:45 PM</div>
<div class="bar" style="left:2902px;top:1360px;width:639px"></div>
<div class="seg" style="left:3413px;top:1360px;width:107px"></div>
<div class="dotw" style="left:3413px;top:1359px"></div>
<div class="t st" style="left:2902.0px;top:1382.5px;font-size:35px;letter-spacing:-0.9px">8:30 PM – 11:00 PM</div>
<div class="t num" style="left:2770.5px;top:1479.0px;font-size:35px;">4</div>
<svg class="a" style="left:2840.0px;top:1480.8px" width="29" height="42" viewBox="0 0 45 62"><path d="M22.5 62 C18 54 0 36 0 22.5 C0 10 10 0 22.5 0 C35 0 45 10 45 22.5 C45 36 27 54 22.5 62Z" fill="#8070a8"/></svg>
<div class="t ti" style="left:2902.0px;top:1460.3px;font-size:37px;">1944 Mason St</div>
<div class="t st" style="left:2902.0px;top:1508.5px;font-size:35px;">No Recipient</div>
<div class="t num" style="left:2770.5px;top:1604.5px;font-size:35px;">5</div>
<svg class="a" style="left:2840.0px;top:1606.3px" width="29" height="42" viewBox="0 0 45 62"><path d="M22.5 62 C18 54 0 36 0 22.5 C0 10 10 0 22.5 0 C35 0 45 10 45 22.5 C45 36 27 54 22.5 62Z" fill="#a58e2f"/></svg>
<div class="t ti" style="left:2902.0px;top:1585.8px;font-size:37px;">99 2nd St</div>
<div class="t st" style="left:2902.0px;top:1634.0px;font-size:35px;">Gray McCarty</div>
<div class="bar" style="left:2902px;top:1690px;width:639px"></div>
<div class="seg" style="left:2902px;top:1690px;width:497px"></div>
<div class="dotw" style="left:3413px;top:1689px"></div>
<div class="t st" style="left:2902.0px;top:1713.0px;font-size:35px;letter-spacing:-0.9px">Before 7:30 PM</div>
<div class="t num" style="left:2770.5px;top:1810.2px;font-size:35px;">6</div>
<svg class="a" style="left:2840.0px;top:1812.0px" width="29" height="42" viewBox="0 0 45 62"><path d="M22.5 62 C18 54 0 36 0 22.5 C0 10 10 0 22.5 0 C35 0 45 10 45 22.5 C45 36 27 54 22.5 62Z" fill="#8070a8"/></svg>
<div class="t ti" style="left:2902.0px;top:1791.5px;font-size:37px;">600 Harrison St</div>
<div class="t st" style="left:2902.0px;top:1839.8px;font-size:35px;">Brian Rekasis</div>
<svg class="a" style="left:2766px;top:1950px" width="30" height="19" viewBox="0 0 30 19"><path d="M0 0H30L15 19Z" fill="#b8bfc9"/></svg>
<div class="a" style="left:2836px;top:1939px;width:37px;height:37px;border-radius:50%;background:#3d77b3"></div>
<div class="t ti" style="left:2903.0px;top:1918.5px;font-size:37px;">Cindy Cheung</div>
<div class="t st" style="left:2903.0px;top:1966.2px;font-size:35px;">Offline, 0 of 4</div>
<div class="a" style="left:0px;top:105px;width:3582px;height:2px;background:#3b4759;"></div>
<div class="a" id="modal">
 <div class="a" style="left:0;top:0;width:1010px;height:180px;background:#fff;border-bottom:2px solid #e7eaef"></div>
 <div class="a" style="left:0;top:645px;width:1010px;height:117px;background:#fff;border-top:2px solid #e7eaef"></div>
</div>
<div class="t" style="left:1330px;top:673px;font-size:41px;font-weight:bold;color:#333d4b;letter-spacing:-0.4px">Auto-assign 2 tasks</div>
<div class="t" style="left:1330px;top:731px;font-size:36px;color:#8d98a8;letter-spacing:-0.15px">Choose how to auto-assign tasks</div>
<div class="t" style="left:1330px;top:880px;font-size:36px;color:#8d98a8;letter-spacing:0.6px">Auto-assign to</div>
<svg class="a" style="left:1634px;top:872px" width="52" height="52" viewBox="0 0 52 52"><circle cx="26" cy="26" r="26" fill="#3ea3ec"/><circle cx="26" cy="26" r="10.5" fill="#fff"/></svg>
<div class="t" style="left:1708px;top:880px;font-size:36px;color:#333d4b;letter-spacing:0.5px;-webkit-text-stroke:0.6px currentColor">Closest driver</div>
<svg class="a" style="left:1634px;top:946px" width="52" height="52" viewBox="0 0 52 52"><circle cx="26" cy="26" r="26" fill="#cdd2da"/></svg>
<div class="t" style="left:1708px;top:955px;font-size:36px;color:#333d4b;letter-spacing:0.6px;-webkit-text-stroke:0.6px currentColor">Shortest route</div>
<div class="t" style="left:1330px;top:1058px;font-size:36px;color:#8d98a8;letter-spacing:0.4px">Task limit per driver</div>
<div class="a" style="left:1711px;top:1040px;width:169px;height:71px;background:#fff;border-radius:8px"></div>
<div class="t" style="left:1743px;top:1058px;font-size:36px;color:#333d4b">12</div>
<svg class="a" style="left:1826px;top:1055px" width="30" height="42" viewBox="0 0 30 42"><path d="M3 18L15 3L27 18Z M3 25L15 40L27 25Z" fill="#8d98a8"/></svg>
<svg class="a" style="left:1329px;top:1155px" width="53" height="53" viewBox="0 0 53 53"><rect width="53" height="53" rx="8" fill="#3ea3ec"/><path d="M13 27L22 37L40 15" fill="none" stroke="#fff" stroke-width="6" stroke-linecap="round" stroke-linejoin="round"/></svg>
<div class="t" style="left:1403px;top:1163px;font-size:36px;color:#333d4b;letter-spacing:0.5px;-webkit-text-stroke:0.6px currentColor">Ignore linked tasks</div>
<div class="t" style="left:1330px;top:1313px;font-size:37px;font-weight:bold;color:#3a9fe6;letter-spacing:-0.6px">Cancel</div>
<div class="a" style="left:2093px;top:1294px;width:181px;height:73px;background:#3ea3ec;border-radius:8px"></div>
<div class="t" style="left:2124px;top:1313px;font-size:37px;font-weight:bold;color:#fff;letter-spacing:-0.6px">Assign</div>

</body></html>
